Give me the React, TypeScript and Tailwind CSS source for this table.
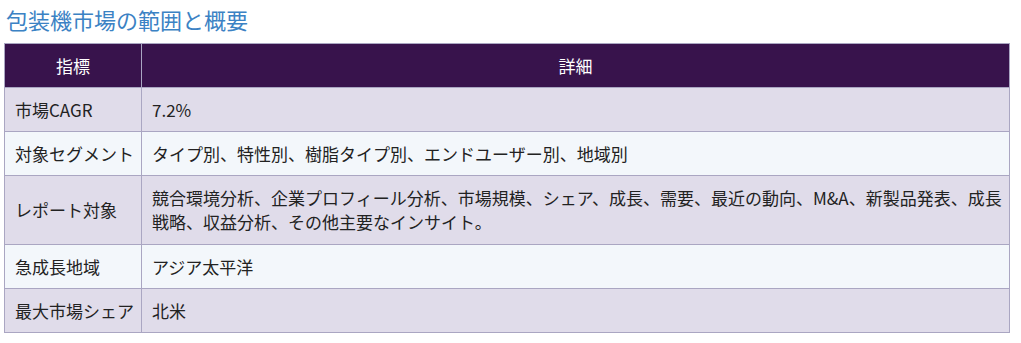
import React from "react";

const rows: { k: string; v: React.ReactNode; tall?: boolean }[] = [
  { k: "市場CAGR", v: "7.2%" },
  { k: "対象セグメント", v: "タイプ別、特性別、樹脂タイプ別、エンドユーザー別、地域別" },
  {
    k: "レポート対象",
    tall: true,
    v: (
      <>
        <span className="block whitespace-nowrap">
          競合環境分析、企業プロフィール分析、市場規模、シェア、成長、需要、最近の動向、M&amp;A、新製品発表、成長
        </span>
        <span className="block whitespace-nowrap">戦略、収益分析、その他主要なインサイト。</span>
      </>
    ),
  },
  { k: "急成長地域", v: "アジア太平洋" },
  { k: "最大市場シェア", v: "北米" },
];

export default function App() {
  return (
    <div className="w-[1021px] h-[343px] bg-white font-['Noto_Sans_CJK_JP','Noto_Sans',sans-serif] text-[#222]">
      <div className="pl-[6px] pt-[4px] pb-[9px] text-[22px] leading-[30px] text-[#3b82c4]">
        包装機市場の範囲と概要
      </div>
      <table className="ml-[4px] w-[1006px] table-fixed border-collapse text-[17px]">
        <colgroup>
          <col className="w-[137px]" />
          <col />
        </colgroup>
        <thead>
          <tr className="bg-[#38134c] text-white">
            <th className="border border-[#aaa6c2] pt-[10px] pb-[9px] leading-[24px] font-normal text-center">指標</th>
            <th className="border border-[#aaa6c2] pt-[10px] pb-[9px] leading-[24px] font-normal text-center">詳細</th>
          </tr>
        </thead>
        <tbody>
          {rows.map((r, i) => (
            <tr key={r.k} className={i % 2 === 0 ? "bg-[#e0dcea]" : "bg-[#f3f7fb]"}>
              <td
                className={
                  r.tall
                    ? "border border-[#aaa6c2] pl-[10px] pr-[4px] py-[10px] leading-[24px] align-middle whitespace-nowrap"
                    : "border border-[#aaa6c2] pl-[10px] pr-[4px] pt-[10px] pb-[9px] leading-[24px] align-middle whitespace-nowrap"
                }
              >
                {r.k}
              </td>
              <td
                className={
                  r.tall
                    ? "border border-[#aaa6c2] pl-[10px] pr-[6px] py-[10px] leading-[24px] align-middle"
                    : "border border-[#aaa6c2] pl-[10px] pr-[6px] pt-[10px] pb-[9px] leading-[24px] align-middle"
                }
              >
                {r.v}
              </td>
            </tr>
          ))}
        </tbody>
      </table>
    </div>
  );
}
